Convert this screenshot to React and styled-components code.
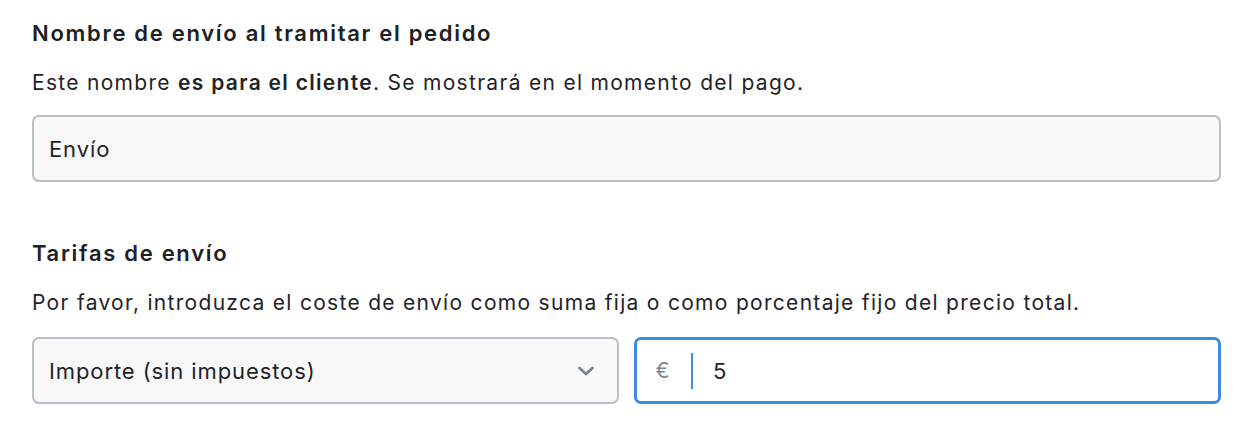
import React from "react";
import styled, { createGlobalStyle } from "styled-components";

const Global = createGlobalStyle`
  html, body { margin: 0; padding: 0; background: #ffffff; }
  body { font-family: "Inter", "Liberation Sans", sans-serif; color: #1f2328; }
`;

const Page = styled.div`
  width: 1189px;
  padding: 18px 0 0 32px;
  display: flex;
  flex-direction: column;
`;

const Section = styled.section`
  display: flex;
  flex-direction: column;
  margin-bottom: ${(p) => p.$mb || 0}px;
`;

const Heading = styled.h2`
  margin: 0;
  font-family: "Inter", sans-serif;
  font-size: 22px;
  font-weight: 600;
  letter-spacing: 1.7px;
  line-height: 30px;
  color: #1d2025;
`;

const Desc = styled.p`
  margin: 20px 0 ${(p) => p.$mb}px;
  font-family: "Inter", sans-serif;
  font-size: 21px;
  letter-spacing: 1.3px;
  line-height: 30px;
  color: #1f2328;
  b { font-weight: 600; }
`;

const Field = styled.div`
  height: 67px;
  box-sizing: border-box;
  border: 2px solid #b7bfc8;
  border-radius: 7px;
  background: #f8f8f8;
  display: flex;
  align-items: center;
  padding: 0 22px 0 15px;
  font-size: 22px;
  letter-spacing: 0.9px;
  color: #1f2328;
`;

const Row = styled.div`
  display: grid;
  grid-template-columns: 1fr 1fr;
  gap: 15px;
`;

const Select = styled(Field)`
  justify-content: space-between;
`;

const AmountBox = styled.div`
  height: 67px;
  box-sizing: border-box;
  border: 3px solid #3d8ae6;
  border-radius: 7px;
  background: #ffffff;
  display: flex;
  align-items: center;
`;

const Prefix = styled.span`
  width: 56px;
  height: 36px;
  box-sizing: border-box;
  display: flex;
  align-items: center;
  justify-content: center;
  padding-right: 3px;
  border-right: 2px solid #3d8ae6;
  color: #7b8694;
  font-size: 21px;
  font-family: "Inter", sans-serif;
`;

const Value = styled.span`
  padding-left: 20px;
  font-size: 22px;
  font-family: "Inter", sans-serif;
  color: #1f2328;
`;

const Chevron = () => (
  <svg width="18" height="10" viewBox="0 0 18 10" fill="none">
    <path d="M2.5 2l6.5 6 6.5-6" stroke="#7a8591" strokeWidth="2.8" strokeLinecap="round" strokeLinejoin="round" />
  </svg>
);

export default function App() {
  return (
    <>
      <Global />
      <Page>
        <Section $mb={56}>
          <Heading>Nombre de envío al tramitar el pedido</Heading>
          <Desc $mb={17}>
            Este nombre <b>es para el cliente</b>. Se mostrará en el momento del pago.
          </Desc>
          <Field>Envío</Field>
        </Section>
        <Section>
          <Heading>Tarifas de envío</Heading>
          <Desc $mb={19}>Por favor, introduzca el coste de envío como suma fija o como porcentaje fijo del precio total.</Desc>
          <Row>
            <Select>
              Importe (sin impuestos)
              <Chevron />
            </Select>
            <AmountBox>
              <Prefix>€</Prefix>
              <Value>5</Value>
            </AmountBox>
          </Row>
        </Section>
      </Page>
    </>
  );
}
